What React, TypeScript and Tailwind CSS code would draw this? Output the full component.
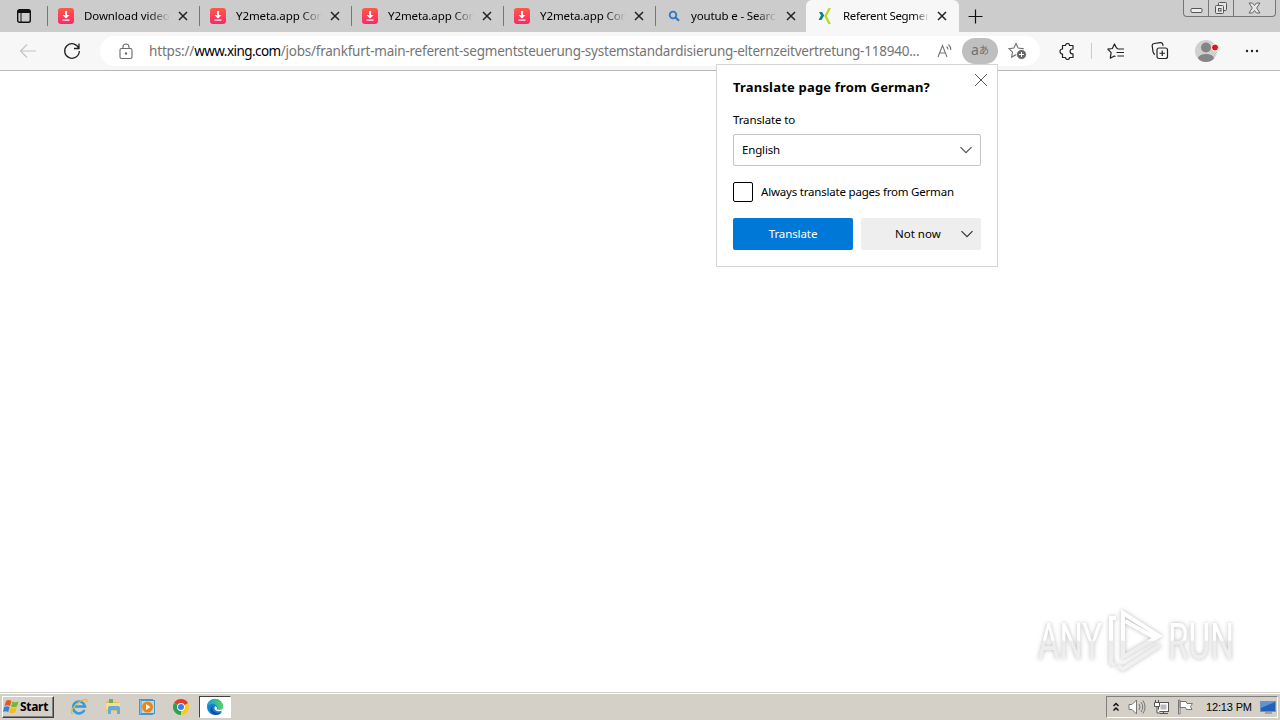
import type { ReactNode } from 'react';

type TabInfo = {
  title: string;
  icon: 'download' | 'search' | 'xing';
  active?: boolean;
};

const tabs: TabInfo[] = [
  { title: 'Download video', icon: 'download' },
  { title: 'Y2meta.app Con', icon: 'download' },
  { title: 'Y2meta.app Con', icon: 'download' },
  { title: 'Y2meta.app Con', icon: 'download' },
  { title: 'youtub e - Searc', icon: 'search' },
  { title: 'Referent Segmen', icon: 'xing', active: true },
];

function Favicon({ name }: { name: TabInfo['icon'] }) {
  if (name === 'download') {
    return (
      <svg width="16" height="16" viewBox="0 0 16 16">
        <defs>
          <linearGradient id="dl" x1="0" y1="0" x2="0" y2="1">
            <stop offset="0" stopColor="#ff5a45" />
            <stop offset="1" stopColor="#fb2668" />
          </linearGradient>
        </defs>
        <rect width="16" height="16" rx="3" fill="url(#dl)" />
        <path d="M7 3h2v4h2.500L8 10.500 4.500 7H7zM4.500 11.500h7v1.300h-7z" fill="#fff" />
      </svg>
    );
  }
  if (name === 'search') {
    return (
      <svg width="16" height="16" viewBox="0 0 16 16" fill="none">
        <circle cx="7" cy="7" r="3.300" stroke="#2f78c4" strokeWidth="1.800" />
        <path d="M9.500 9.500L13 12.800" stroke="#2f78c4" strokeWidth="2.200" />
      </svg>
    );
  }
  return (
    <svg width="16" height="16" viewBox="0 0 16 16">
      <path d="M1 4h3l2.200 3.500L3.500 12H.5L3 7.500z" fill="#0a8094" />
      <path d="M10.500 0H13L8.800 8l4.200 8h-2.700L6.200 8z" fill="#b7dc22" />
    </svg>
  );
}

function Tab({ tab }: { tab: TabInfo }) {
  if (tab.active) {
    return (
      <div className="flex h-8 w-[153px] shrink-0 items-center rounded-t-md bg-[#f7f7f7] pl-3">
        <Favicon name={tab.icon} />
        <span className="ml-[9px] w-[86px] whitespace-nowrap tracking-[-0.32px] [mask-image:linear-gradient(to_right,black_82%,transparent)]">
          {tab.title}
        </span>
        <CloseIcon className="ml-[7px]" />
      </div>
    );
  }
  const search = tab.icon === 'search';
  return (
    <div className={`flex h-8 shrink-0 items-center ${search ? 'w-[151px]' : 'w-[152px]'} pl-[11px]`}>
      <Favicon name={tab.icon} />
      <span
        className={`w-[86px] whitespace-nowrap [mask-image:linear-gradient(to_right,black_75%,transparent)] ${
          search ? 'ml-[9px] tracking-[-0.15px]' : 'ml-[10px] tracking-[-0.1px]'
        }`}
      >
        {tab.title}
      </span>
      <CloseIcon className={search ? 'ml-2' : 'ml-[7px]'} />
    </div>
  );
}

function CloseIcon({ className = '' }: { className?: string }) {
  return (
    <svg className={className} width="12" height="12" viewBox="0 0 12 12" stroke="#222" strokeWidth="1.500">
      <path d="M2 2l8 8M10 2l-8 8" />
    </svg>
  );
}

function Slot({ className, children }: { className: string; children: ReactNode }) {
  return <div className={`flex h-8 shrink-0 items-center justify-center ${className}`}>{children}</div>;
}

function TabStrip() {
  return (
    <div className="flex h-8 bg-[#cccccc] text-[11.5px] text-black">
      <Slot className="w-[47px]">
        <svg width="14" height="14" viewBox="0 0 14 14">
          <rect x=".7" y=".7" width="12.600" height="12.600" rx="1.800" fill="none" stroke="#111" strokeWidth="1.400" />
          <path d="M1 1h12v3H1z" fill="#111" />
          <path d="M4 4v9" stroke="#111" />
        </svg>
      </Slot>
      {tabs.map((tab, i) => (
        <div key={i} className="flex">
          {!tab.active && <div className="-mr-px mt-1.5 h-5 w-px bg-[#777]" />}
          <Tab tab={tab} />
        </div>
      ))}
      <Slot className="w-[32px]">
        <svg width="15" height="15" viewBox="0 0 15 15" stroke="#111" strokeWidth="1.200">
          <path d="M7.500 .5v14M.5 7.500h14" />
        </svg>
      </Slot>
      <div className="ml-auto mr-1 flex h-[17px] w-[93px] rounded-b-[4px] border border-t-0 border-[#777] bg-[#d2d2d2]">
        <div className="flex w-[25px] items-center justify-center border-r border-[#777]">
          <svg width="13" height="16" viewBox="0 0 13 16">
            <rect x="1" y="8.500" width="11" height="4" rx="1" fill="#eee" stroke="#555" />
          </svg>
        </div>
        <div className="flex w-[25px] items-center justify-center border-r border-[#777]">
          <svg width="14" height="14" viewBox="0 0 14 14" fill="#e6e6e6" stroke="#555">
            <rect x="4.500" y="1.500" width="8" height="8" rx="1" />
            <rect x="1.500" y="4.500" width="8" height="8" rx="1" />
            <rect x="4.500" y="7.500" width="2.500" height="2.500" />
          </svg>
        </div>
        <div className="flex flex-1 items-center justify-center">
          <svg width="13" height="12" viewBox="0 0 13 12" fill="#e6e6e6" stroke="#666">
            <path d="M1 1h3.500l2 2.500L8.500 1H12L8.700 6 12 11H8.500l-2-2.500-2 2.500H1l3.300-5z" />
          </svg>
        </div>
      </div>
    </div>
  );
}

function Toolbar() {
  return (
    <div className="flex h-[39px] items-center border-b border-[#b8b8b8] bg-[#f7f7f7]">
      <Slot className="w-14">
        <svg width="18" height="16" viewBox="0 0 18 16" fill="none" stroke="#c5c5c5" strokeWidth="1.200">
          <path d="M17 8H1.500M8 1.500L1.500 8 8 14.500" />
        </svg>
      </Slot>
      <Slot className="w-8">
        <svg width="18" height="18" viewBox="0 0 18 18" fill="none" stroke="#222" strokeWidth="1.300">
          <path d="M15.800 6.300A7.300 7.300 0 1 0 16.300 9M16 1.500v5h-5" />
        </svg>
      </Slot>
      <div className="ml-3 flex h-[30px] w-[940px] shrink-0 items-center rounded-full bg-white">
        <Slot className="ml-[17px] w-[18px]">
          <svg width="14" height="17" viewBox="0 0 14 17" fill="none" stroke="#6a6a6a" strokeWidth="1.100">
            <rect x="1" y="5.500" width="12" height="10" rx="1.500" />
            <path d="M4 5.500V4a3 3 0 0 1 6 0v1.500" />
            <circle cx="7" cy="10.500" r=".7" fill="#6a6a6a" />
          </svg>
        </Slot>
        <div className="ml-[14px] w-[780px] shrink-0 whitespace-nowrap text-[13.5px] text-[#747474]">
          <span className="tracking-[-0.17px]">https://</span>
          <span className="text-black tracking-[-0.55px]">www.xing.com</span>
          <span className="tracking-[-0.23px]">
            /jobs/frankfurt-main-referent-segmentsteuerung-systemstandardisierung-elternzeitvertretung-118940...
          </span>
        </div>
        <Slot className="w-[32px]">
          <svg width="16" height="16" viewBox="0 0 16 16" fill="none" stroke="#777" strokeWidth="1.100">
            <path d="M1 14L5.500 2.500 10 14M2.700 10h5.700M9.500 3.500c1 .8 1.400 1.800 1.400 3M11.500 1.500c1.700 1.500 2.300 3.100 2.300 5.500" />
          </svg>
        </Slot>
        <div className="ml-px flex h-[26px] w-9 shrink-0 items-center justify-center rounded-full bg-[#bfbfbf] pb-0.5 leading-none text-[#707070]">
          <span className="text-[14px]">a</span>
          <span className="font-['Noto_Sans_CJK_JP',sans-serif] text-[10px]">あ</span>
        </div>
        <Slot className="w-[38px]">
          <svg width="19" height="18" viewBox="0 0 19 18">
            <path
              d="M8 1.500l2.100 4.600 5 .6-3.700 3.400 1 5L8 12.700l-4.400 2.400.9-5L.9 6.700l5-.6z"
              fill="none"
              stroke="#707070"
              strokeWidth="1.100"
            />
            <circle cx="13.500" cy="12.500" r="5" fill="#666" stroke="#fff" />
            <path d="M13.500 10v5M11 12.500h5" stroke="#fff" />
          </svg>
        </Slot>
      </div>
      <Slot className="w-[54px]">
        <svg width="17" height="17" viewBox="0 0 17 17" fill="none" stroke="#222" strokeWidth="1.200" strokeLinejoin="round">
          <path d="M3.500 2.500h3a2 2 0 0 1 4 0H14V6h-.5a2.400 2.400 0 0 0 0 4.800h.5v3.700h-3.500a2 2 0 0 1-4 0h-3V11a2.500 2.500 0 0 1 0-5z" />
        </svg>
      </Slot>
      <div className="-ml-[3px] h-4 w-px bg-[#ccc]" />
      <Slot className="w-12">
        <svg width="18" height="17" viewBox="0 0 18 17" fill="none" stroke="#222" strokeWidth="1.200" strokeLinejoin="round">
          <path d="M11 5.500L9.500 5 7.500 1 5.300 5.500.8 6.200l3.300 3.400-.8 5.600 4-2.200 1.200.5M10.500 6H17M9.500 9.500H17M10.500 13H17" />
        </svg>
      </Slot>
      <Slot className="w-10">
        <svg width="18" height="18" viewBox="0 0 18 18" fill="none" stroke="#222" strokeWidth="1.200">
          <rect x="6" y="6" width="10.500" height="10.500" rx="2" />
          <path d="M11.250 8.500v5.500M8.500 11.250H14M4 12.500C2.600 12 2.200 11 2 9.700L1.200 4C1 2.500 2 1.700 3.200 1.500l6-.8c1.300-.2 2.300.5 2.600 1.700l.3 1.400" />
        </svg>
      </Slot>
      <Slot className="ml-[5px] w-[48px]">
        <svg width="30" height="24" viewBox="0 0 30 24">
          <defs>
            <clipPath id="avatar">
              <circle cx="12" cy="12" r="11" />
            </clipPath>
          </defs>
          <g clipPath="url(#avatar)">
            <rect width="24" height="24" fill="#d0d0d0" />
            <circle cx="12" cy="8.500" r="5" fill="#858585" />
            <ellipse cx="12" cy="19.500" rx="8" ry="4.500" fill="#858585" />
          </g>
          <circle cx="21" cy="8.500" r="3.500" fill="#e1141e" stroke="#f7f7f7" />
        </svg>
      </Slot>
      <Slot className="w-[38px]">
        <svg width="14" height="4" viewBox="0 0 14 4" fill="#222">
          <circle cx="2" cy="2" r="1.200" />
          <circle cx="7" cy="2" r="1.200" />
          <circle cx="12" cy="2" r="1.200" />
        </svg>
      </Slot>
    </div>
  );
}

function Chevron({ color }: { color: string }) {
  return (
    <svg width="12" height="8" viewBox="0 0 12 8" fill="none" stroke={color} strokeWidth="1.200">
      <path d="M.5 1.200L6 6.700l5.500-5.500" />
    </svg>
  );
}

function TranslatePopup() {
  return (
    <div className="absolute left-[716px] top-[64px] h-[203px] w-[282px] border border-[#d4d4d4] bg-white px-4 text-[11.5px] text-black">
      <div className="flex h-[46px] justify-between">
        <h1 className="pt-[13px] text-[13px] font-bold leading-[18px] whitespace-nowrap tracking-[0.19px]">
          Translate page from German?
        </h1>
        <svg className="-mr-[7px] mt-2 shrink-0" width="14" height="14" viewBox="0 0 14 14" stroke="#555">
          <path d="M1 1l12 12M13 1L1 13" />
        </svg>
      </div>
      <div className="h-[23px] leading-[18px] tracking-[-0.12px]">Translate to</div>
      <div className="flex h-8 items-center justify-between rounded-[2px] border border-[#c4c4c4] px-2">
        <span className="tracking-[-0.15px]">English</span>
        <Chevron color="#555" />
      </div>
      <div className="mt-4 flex h-5 items-center gap-2">
        <div className="h-5 w-5 rounded-[2px] border border-black" />
        <span className="whitespace-nowrap tracking-[-0.2px]">Always translate pages from German</span>
      </div>
      <div className="mt-4 flex gap-2">
        <button className="h-8 w-[120px] rounded-[2px] bg-[#0078d7] text-white tracking-[-0.1px]">Translate</button>
        <button className="flex h-8 w-[120px] items-center justify-between rounded-[2px] bg-[#eeeeee] pl-[34px] pr-2">
          Not now
          <Chevron color="#333" />
        </button>
      </div>
    </div>
  );
}

function Watermark() {
  return (
    <svg
      className="absolute left-[1030px] top-[600px] [filter:drop-shadow(0_0_2px_#bbb)]"
      width="210"
      height="80"
      viewBox="0 0 210 80"
    >
      <defs>
        <linearGradient id="wm" gradientUnits="userSpaceOnUse" x1="0" y1="0" x2="0" y2="80">
          <stop offset=".5" stopColor="#fff" />
          <stop offset=".52" stopColor="#ececec" />
          <stop offset="1" stopColor="#f4f4f4" />
        </linearGradient>
      </defs>
      <g fill="url(#wm)" fontFamily="Roboto, sans-serif" fontSize="50">
        <text x="8" y="59" textLength="64" lengthAdjust="spacingAndGlyphs">ANY</text>
        <text x="138" y="59" textLength="66" lengthAdjust="spacingAndGlyphs">RUN</text>
      </g>
      <g fill="none" stroke="url(#wm)" strokeWidth="4">
        <path d="M93 13v44l36-21zM86 18h-5v45l4 2M95 21l32 18M88 66l5 3 37-24" />
      </g>
    </svg>
  );
}

function WindowsFlag() {
  return (
    <svg width="17" height="16" viewBox="0 0 17 16">
      <path d="M3 2c2-1.500 4-.8 5.500 0L7 7c-2-1-3.700-1-5.500 0z" fill="#ed5520" />
      <path d="M9.500 2.500c2 1 4 1 6 0l-1.500 5c-2 1-4 .9-6 0z" fill="#73b932" />
      <path d="M1.200 8c2-1 3.700-.9 5.500 0l-1.500 5c-2-1-3.700-1-5.200 0z" fill="#3481d4" />
      <path d="M7.700 8.500c2 1 4 1 6 0l-1.500 5c-2 1-4 1-6 0z" fill="#f5bd1c" />
    </svg>
  );
}

function Taskbar() {
  return (
    <footer className="flex h-7 items-center border-t border-[#cfcdc8] bg-[#d4d0c8] shadow-[inset_0_1px_white]">
      <button className="ml-[2px] mt-px flex h-[22px] w-[52px] items-center border border-b-[#404040] border-l-white border-r-[#404040] border-t-white text-[12px] font-bold tracking-[-0.3px] text-black shadow-[inset_-1px_-1px_#808080]">
        <WindowsFlag />
        Start
      </button>
      <Slot className="ml-2 w-[34px]">
        <svg width="18" height="18" viewBox="0 0 18 18" fill="none">
          <path d="M14.500 12a6 6 0 1 1 .5-3.500H5" stroke="#2d9de0" strokeWidth="2.500" />
          <path d="M2.500 16C-.5 14 4 7 10 3.500s8-2.500 6.500 1" stroke="#e9b931" strokeWidth="1.300" />
        </svg>
      </Slot>
      <Slot className="w-[34px]">
        <svg width="17" height="17" viewBox="0 0 17 17">
          <path d="M1 3h5l1 1h7v9H1z" fill="#e8bd52" />
          <path d="M4 1h4v4H4z" fill="#6fae58" />
          <path d="M1 5h14v7H1z" fill="#f9df8d" />
          <path d="M3 10q0-2 2-2h8q2 0 2 2v6h-3v-4H6v4H3z" fill="#62addb" />
        </svg>
      </Slot>
      <Slot className="w-[34px]">
        <svg width="16" height="16" viewBox="0 0 16 16">
          <rect x=".5" y=".5" width="13" height="15" fill="#c5e2f5" stroke="#4c93c6" />
          <rect x="2" y="1.500" width="13.500" height="13" fill="#b5daf0" stroke="#4c93c6" />
          <circle cx="8.500" cy="8" r="5.500" fill="#f28313" />
          <path d="M7 5v6l4.500-3z" fill="#fff" />
        </svg>
      </Slot>
      <Slot className="w-[34px]">
        <svg width="16" height="16" viewBox="0 0 16 16">
          <path d="M8 8L1.070 4A8 8 0 0 1 14.930 4z" fill="#e33b2e" />
          <path d="M8 8l6.930-4A8 8 0 0 1 8 16z" fill="#fccb1d" />
          <path d="M8 8v8A8 8 0 0 1 1.070 4z" fill="#2ba24c" />
          <path d="M8 4h6.930L8 8z" fill="#e33b2e" />
          <circle cx="8" cy="8" r="3.900" fill="#fff" />
          <circle cx="8" cy="8" r="3" fill="#3c7de8" />
        </svg>
      </Slot>
      <div className="ml-px mt-px flex h-[22px] w-[32px] items-center justify-center border border-b-white border-l-[#404040] border-r-white border-t-[#404040] bg-white">
        <svg width="18" height="18" viewBox="0 0 18 18">
          <defs>
            <linearGradient id="edge" x1="0" y1="0" x2="1" y2="0">
              <stop offset="0" stopColor="#169ed9" />
              <stop offset="1" stopColor="#58d65a" />
            </linearGradient>
          </defs>
          <circle cx="9" cy="9" r="8" fill="#1480d0" />
          <path d="M1 9a8 8 0 0 1 16-.5c.4 3.500-3.500 4.500-6.500 3.200 1-1 1.300-2.700.2-4C8.700 5.200 3.200 5 1 9z" fill="url(#edge)" />
          <path d="M7 8c-2 3 .5 7 5 7 2 0 3-.5 4-1-3 4-9 3.500-11 0C3.700 11.500 5 9 7 8z" fill="#114f9b" />
          <path d="M9 8.200c-1.500 2.500.5 5 4 5 1.600 0 2.800-.4 4-1.200l1 2V9c-1 3-4.500 3.500-7.300 2.600.8-1.200.5-3-1.700-3.400z" fill="#fff" />
        </svg>
      </div>
      <div className="ml-auto mr-[2px] mt-px flex h-[22px] w-[172px] items-center border border-b-white border-l-[#808080] border-r-white border-t-[#808080]">
        <svg className="ml-[5px]" width="8" height="11" viewBox="0 0 8 11" fill="none" stroke="#111" strokeWidth="1.500">
          <path d="M1.500 4l2.500-2.500L6.500 4M1.500 8.500L4 6l2.500 2.500" />
        </svg>
        <svg className="ml-2" width="18" height="16" viewBox="0 0 18 16" fill="none" stroke="#777">
          <path d="M1 5.500h3L8.500 1v14L4 10.500H1z" fill="#fff" />
          <path d="M11 5q2 3 0 6M13 3q3.500 5 0 10M15 1.500q4 6.500 0 13" />
        </svg>
        <svg className="ml-[7px]" width="17" height="16" viewBox="0 0 17 16" stroke="#555">
          <rect x="5.500" y="3.500" width="10" height="9" fill="#fff" />
          <path d="M7.500 5.500h6v5h-6z" fill="#bbb" stroke="none" />
          <path d="M7 14.500h8M10.500 12.500v2" />
          <path d="M1.500 3.500h5v4h-5zM2.500 1v2.500M5.500 1v2.500M4 7.500V14h3" fill="#fff" />
        </svg>
        <svg className="ml-[7px]" width="18" height="16" viewBox="0 0 18 16" stroke="#777" fill="#fff">
          <path d="M3 2.500h6l1 2h5.500l-2 3 1.500 3H9.500l-1-2H3zM1.500 1h1.500v14H1.500z" />
        </svg>
        <span className="ml-[11px] w-[46px] whitespace-nowrap font-['Liberation_Sans',sans-serif] text-[11px] tracking-[-0.15px] text-black">
          12:13 PM
        </span>
        <svg className="ml-2 shrink-0" width="16" height="13" viewBox="0 0 16 13">
          <rect x=".5" y=".5" width="15" height="10" fill="#2461b5" stroke="#7194bd" />
          <path d="M1 1h14L1 7z" fill="#5c94d6" />
          <path d="M5 12h7" stroke="#777" />
        </svg>
      </div>
    </footer>
  );
}

export default function App() {
  return (
    <div className="relative flex h-[720px] w-[1280px] flex-col overflow-hidden bg-white font-['Noto_Sans','Open_Sans',sans-serif]">
      <TabStrip />
      <Toolbar />
      <main className="flex-1 bg-white" />
      <Taskbar />
      <TranslatePopup />
      <Watermark />
    </div>
  );
}
